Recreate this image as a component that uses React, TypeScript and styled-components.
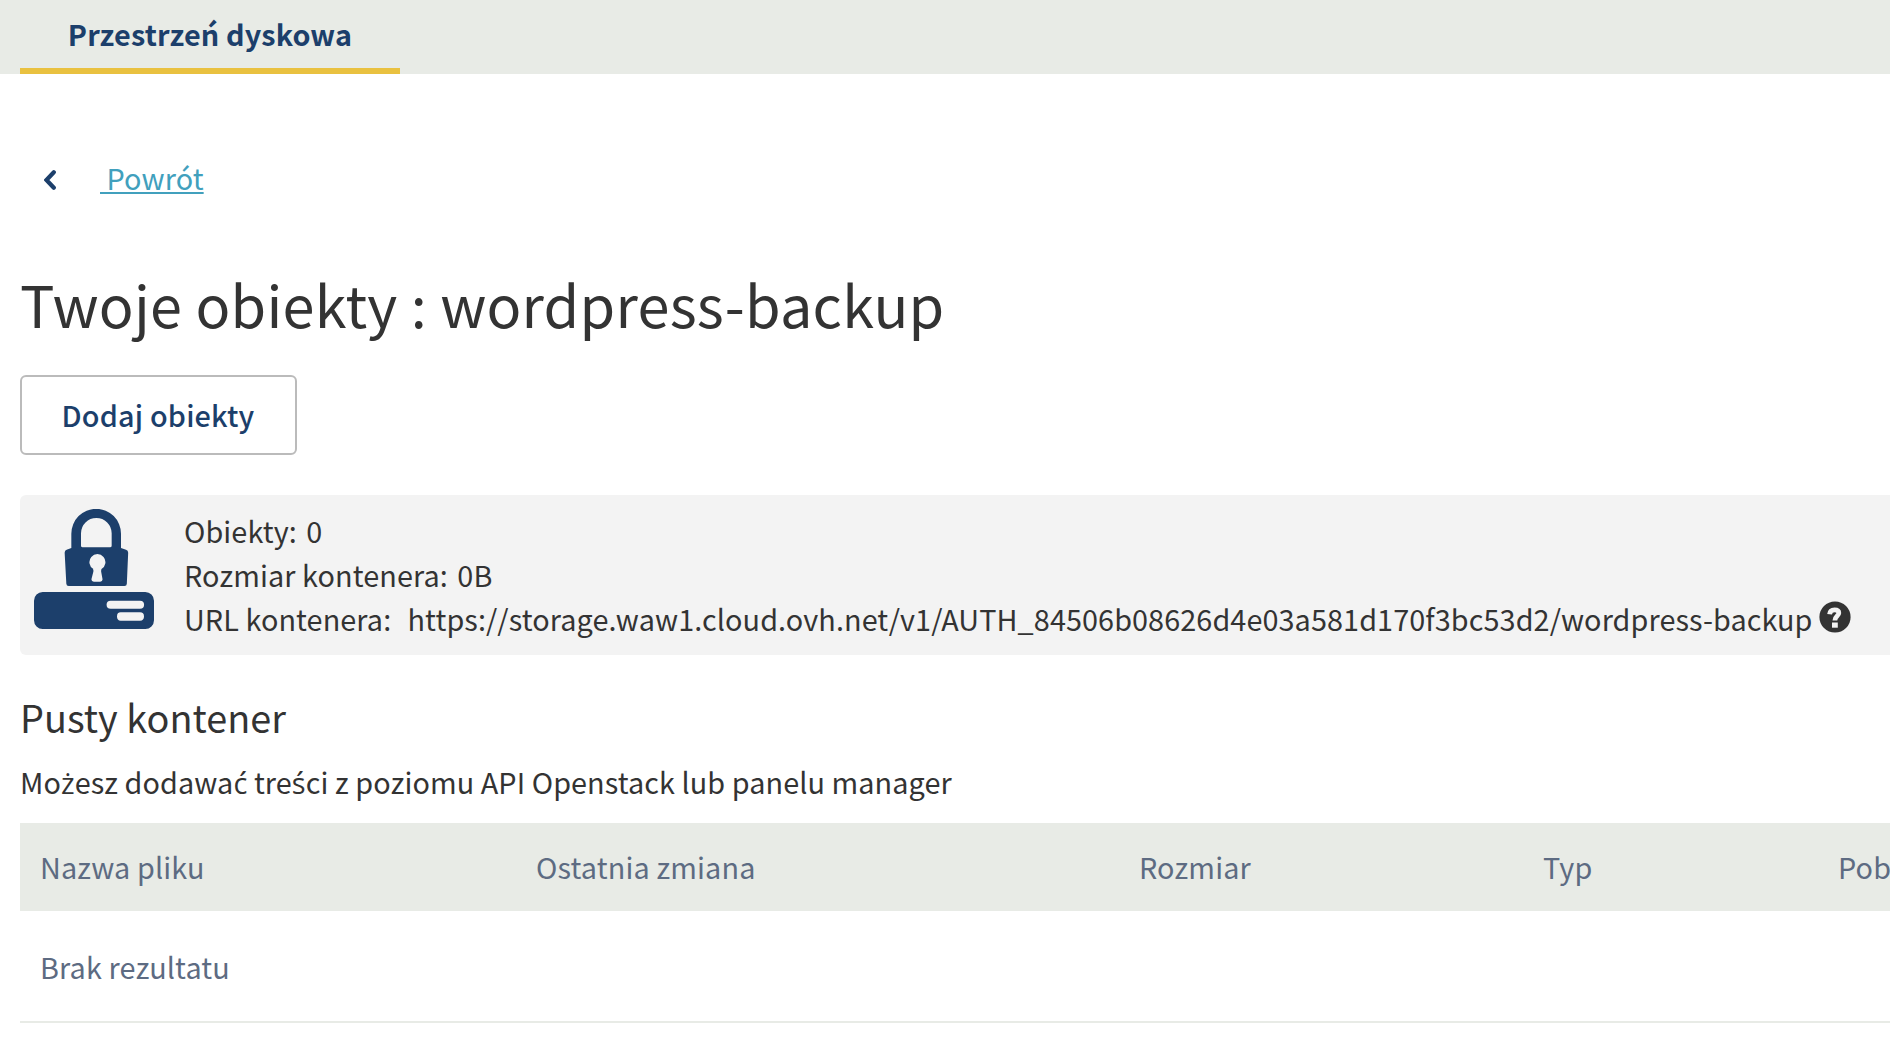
import React from "react";
import styled, { createGlobalStyle } from "styled-components";

const color = {
  navy: "#1c3f6b",
  text: "#333333",
  muted: "#5d6b82",
  link: "#41a0bd",
  yellow: "#e9c140",
  band: "#e8ebe6",
  panel: "#f3f3f3",
  border: "#bbbbbb",
};

const GlobalStyle = createGlobalStyle`
  * {
    box-sizing: border-box;
  }
  html {
    overflow: hidden;
  }
  body {
    margin: 0;
    background: #fff;
    color: ${color.text};
    font-family: "Noto Sans CJK SC", "Open Sans", sans-serif;
    font-size: 28.8px;
    line-height: 44px;
    letter-spacing: 0.09px;
    text-size-adjust: none;
  }
`;

const Page = styled.div`
  width: 100%;
  height: 1062px;
  overflow: hidden;
`;

const TabBar = styled.nav`
  display: flex;
  height: 74px;
  padding-left: 20px;
  background: ${color.band};
`;

const Tab = styled.a`
  width: 380px;
  height: 74px;
  padding-top: 12px;
  border-bottom: 6px solid ${color.yellow};
  color: ${color.navy};
  font-weight: 700;
  letter-spacing: 0.13px;
  line-height: 44px;
  text-align: center;
  white-space: nowrap;
`;

const Content = styled.main`
  display: flex;
  flex-direction: column;
  align-items: stretch;
  padding: 82px 0 0 20px;
`;

const BackRow = styled.div`
  display: flex;
  align-items: center;
  gap: 44px;
  height: 44px;
  padding-left: 24px;
`;

const BackIcon = styled.svg`
  margin-top: 4px;
`;

const BackLink = styled.a`
  color: ${color.link};
  letter-spacing: 0.1px;
  text-decoration: underline;
  text-decoration-thickness: 2px;
  text-underline-offset: 2px;
  white-space: pre;
`;

const Title = styled.h1`
  margin: 61px 0 0;
  font-size: 57.6px;
  font-weight: 400;
  letter-spacing: 0.26px;
  line-height: 84px;
  white-space: nowrap;
`;

const AddButton = styled.button`
  align-self: flex-start;
  width: 277px;
  height: 80px;
  margin-top: 30px;
  padding: 0 1px 0 0;
  border: 2px solid ${color.border};
  border-radius: 6px;
  background: #fff;
  color: ${color.navy};
  font: inherit;
  font-weight: 500;
  letter-spacing: 0.18px;
  white-space: nowrap;
`;

const InfoPanel = styled.section`
  display: flex;
  gap: 30px;
  height: 160px;
  margin-top: 40px;
  padding: 14px 0 0 14px;
  border-radius: 6px 0 0 6px;
  background: ${color.panel};
`;

const InfoList = styled.div`
  display: flex;
  flex-direction: column;
`;

const InfoLine = styled.div`
  display: flex;
  height: 44px;
  white-space: nowrap;
`;

const InfoValue = styled.span<{ $gap: number }>`
  margin-left: ${(p) => p.$gap}px;
`;

const HelpIcon = styled.svg`
  margin: 4px 0 0 6px;
`;

const Subtitle = styled.h2`
  margin: 34px 0 0;
  font-size: 37.8px;
  font-weight: 400;
  letter-spacing: 0.03px;
  line-height: 56px;
  white-space: nowrap;
`;

const Hint = styled.p`
  margin: 15px 0 0;
  letter-spacing: 0.08px;
  white-space: nowrap;
`;

const Accented = styled.span`
  font-family: "Open Sans", sans-serif;
  font-size: 29px;
  line-height: 1;
`;

const Table = styled.div`
  margin-top: 19px;
  color: ${color.muted};
  letter-spacing: 0.14px;
`;

const HeadRow = styled.div`
  display: grid;
  grid-template-columns: 496px 603px 404px 295px 72px;
  align-items: center;
  height: 88px;
  background: ${color.band};
`;

const HeadCell = styled.div`
  padding-left: 20px;
  white-space: nowrap;
`;

const EmptyRow = styled.div`
  display: flex;
  align-items: center;
  height: 112px;
  padding: 2px 0 0 20px;
  border-bottom: 2px solid ${color.band};
`;

const columns = ["Nazwa pliku", "Ostatnia zmiana", "Rozmiar", "Typ", "Pob"];

const ChevronLeft = () => (
  <BackIcon width="12" height="20" viewBox="0 0 12 20" fill="none">
    <path d="M9.800 2.300 2.500 10l7.300 7.700" stroke={color.navy} strokeWidth="4.2" strokeLinecap="round" />
  </BackIcon>
);

const LockedContainer = () => (
  <svg width="120" height="120" viewBox="72 72 360 360" fill={color.navy}>
    <path
      fillRule="evenodd"
      d="M184 146a74.5 74.5 0 0 1 149 0V189l15 5q7 2 6.500 10l-4 92q-.3 7-7 7H176q-6.500 0-7-7l-5-92q-.5-7 6-9.500l14-5.500ZM213 145V182q0 5 5 5h82q5 0 5-5V145a46 46 0 0 0-92 0ZM249 252q2 4 1 8l-5.500 22q-1 8 7 8h19q8 0 7-8l-4-22q-.5-4 1-8a24 24 0 1 0-24.500 0Z"
    />
    <path
      fillRule="evenodd"
      d="M98 321H406a26 26 0 0 1 26 26V406a26 26 0 0 1-26 26H98a26 26 0 0 1-26-26V347a26 26 0 0 1 26-26ZM302 347a12 12 0 0 0 0 24.500h88a12 12 0 0 0 0-24.500ZM332 382q-11 0-11 12.500T332 407h58q12 0 12-12.500T390 382Z"
    />
  </svg>
);

const Help = () => (
  <HelpIcon width="32" height="32" viewBox="0 0 32 32" fill="none">
    <circle cx="16" cy="16" r="15.6" fill={color.text} />
    <path
      d="M10.600 13.300C10.900 9.900 13 8.800 15.500 8.800c2.700 0 4.300 1.200 4.300 3.100 0 3.300-3.900 2.900-3.900 7.600"
      stroke={color.panel}
      strokeWidth="4.800"
    />
    <path d="M13 21.500h5.800v5.200H13Z" fill={color.panel} />
  </HelpIcon>
);

export default function App() {
  return (
    <Page>
      <GlobalStyle />
      <TabBar>
        <Tab>Przestrzeń dyskowa</Tab>
      </TabBar>
      <Content>
        <BackRow>
          <ChevronLeft />
          <BackLink>{"\u00a0Powrót"}</BackLink>
        </BackRow>
        <Title>Twoje obiekty : wordpress-backup</Title>
        <AddButton>Dodaj obiekty</AddButton>
        <InfoPanel>
          <LockedContainer />
          <InfoList>
            <InfoLine>
              Obiekty:<InfoValue $gap={9.5}>0</InfoValue>
            </InfoLine>
            <InfoLine>
              Rozmiar kontenera:<InfoValue $gap={9.5}>0B</InfoValue>
            </InfoLine>
            <InfoLine>
              URL kontenera:
              <InfoValue $gap={16.3}>
                https://storage.waw1.cloud.ovh.net/v1/AUTH_84506b08626d4e03a581d170f3bc53d2/wordpress-backup
              </InfoValue>
              <Help />
            </InfoLine>
          </InfoList>
        </InfoPanel>
        <Subtitle>Pusty kontener</Subtitle>
        <Hint>
          Mo<Accented>ż</Accented>esz dodawa<Accented>ć</Accented> tre<Accented>ś</Accented>ci z poziomu API Openstack lub panelu manager
        </Hint>
        <Table>
          <HeadRow>
            {columns.map((name) => (
              <HeadCell key={name}>{name}</HeadCell>
            ))}
          </HeadRow>
          <EmptyRow>Brak rezultatu</EmptyRow>
        </Table>
      </Content>
    </Page>
  );
}
